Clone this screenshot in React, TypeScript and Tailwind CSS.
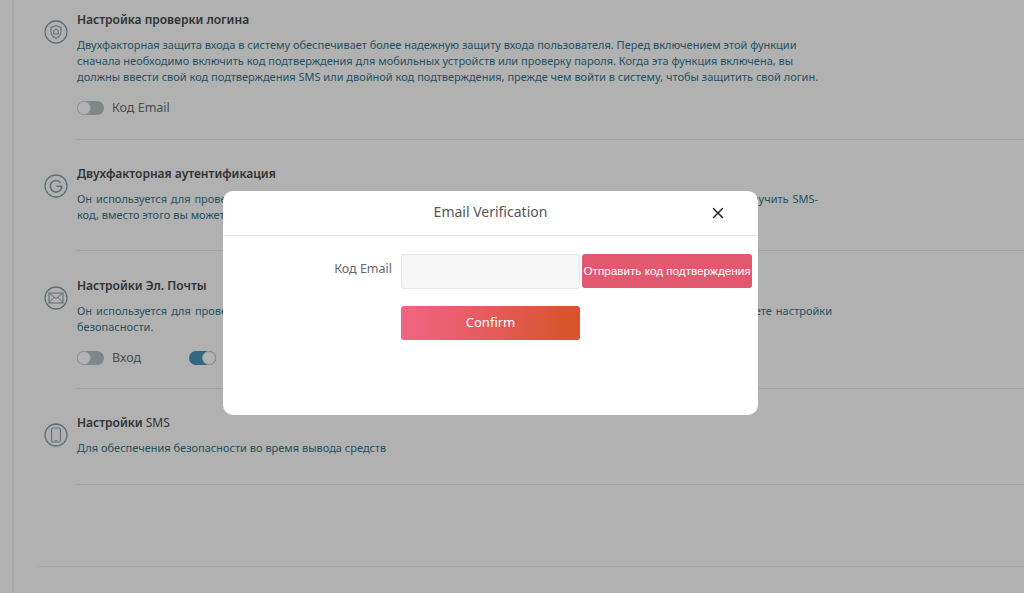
import { X } from "lucide-react";

const font = "font-['Noto_Sans',sans-serif]";

function Toggle({ on = false }: { on?: boolean }) {
  return (
    <span
      className={`flex h-[14px] w-[27px] items-center rounded-full ${on ? "justify-end bg-[#32677f]" : "justify-start bg-[#7f8789]"}`}
    >
      <span className="h-[14px] w-[14px] rounded-full border border-[#8f9698] bg-[#b3b3b3]" />
    </span>
  );
}

function IconCircle({ children }: { children: React.ReactNode }) {
  return (
    <svg viewBox="0 0 24 24" className="h-[24px] w-[24px] shrink-0 fill-none stroke-[#5f7177]">
      <circle cx="12" cy="12" r="11" strokeWidth="1.3" />
      {children}
    </svg>
  );
}

function Section({
  icon,
  title,
  lines,
  firstLineClass = "whitespace-nowrap",
  toggles,
  className,
}: {
  icon: React.ReactNode;
  title: React.ReactNode;
  lines: string[];
  firstLineClass?: string;
  toggles?: React.ReactNode;
  className: string;
}) {
  return (
    <section className={`flex gap-[9px] ${className}`}>
      <div className="flex w-[24px] shrink-0 pt-[8px]">{icon}</div>
      <div className="min-w-0 flex-1">
        <h3 className="text-[12px] font-semibold leading-[16px] text-[#2f3132]">{title}</h3>
        <div className="mt-[9px] text-[11px] leading-[16px] text-[#24505f]">
          {lines.map((l, i) => (
            <div key={l} className={i === 0 ? firstLineClass : "whitespace-nowrap"}>
              {l}
            </div>
          ))}
        </div>
        {toggles}
      </div>
    </section>
  );
}

export default function App() {
  return (
    <div className={`relative h-[593px] w-[1024px] overflow-hidden bg-[#b1b1b1] ${font}`}>
      <div className="ml-[12px] flex h-full flex-col border-l-2 border-[#a8a8a8] pl-[30px]">
        <div className="pt-[12px]">
          <Section
            className="h-[127px]"
            icon={
              <IconCircle>
                <path d="M12 5.6l5 1.9v3.9c0 3.3-2.1 5.5-5 6.9-2.9-1.4-5-3.6-5-6.9V7.5z" strokeWidth="1.1" />
                <path d="M9.6 14v-2.2a2.4 2.4 0 014.8 0V14z" strokeWidth="1" />
              </IconCircle>
            }
            title="Настройка проверки логина"
            lines={[
              "Двухфакторная защита входа в систему обеспечивает более надежную защиту входа пользователя. Перед включением этой функции",
              "сначала необходимо включить код подтверждения для мобильных устройств или проверку пароля. Когда эта функция включена, вы",
              "должны ввести свой код подтверждения SMS или двойной код подтверждения, прежде чем войти в систему, чтобы защитить свой логин.",
            ]}
            toggles={
              <div className="mt-[14px] flex items-center gap-[8px] text-[12.5px] leading-[18px] text-[#4a4c4d]">
                <Toggle />
                <span>Код Email</span>
              </div>
            }
          />
          <div className="ml-[33px] border-t border-[#9ea4a4]" />
        </div>
        <div className="pt-[26px]">
          <Section
            className="h-[84px]"
            icon={
              <IconCircle>
                <path d="M16.6 8.7A5.8 5.8 0 1017.8 12.2h-5.4" strokeWidth="1.6" />
              </IconCircle>
            }
            title="Двухфакторная аутентификация"
            firstLineClass="w-[741px] [text-align-last:justify]"
            lines={[
              "Он используется для проверки безопасности при входе в систему, выводе средств и в других делах. Если вы не можете получить SMS-",
              "код, вместо этого вы можете использовать двухфакторную аутентификацию Google.",
            ]}
          />
          <div className="ml-[33px] border-t border-[#9ea4a4]" />
        </div>
        <div className="pt-[27px]">
          <Section
            className="h-[110px]"
            icon={
              <IconCircle>
                <rect x="5" y="7" width="14" height="10" strokeWidth="1.1" />
                <path d="M5.2 7.2l6.8 5.4 6.8-5.4M5.2 16.8l4.8-5.6M18.8 16.8l-4.8-5.6" strokeWidth="1" />
              </IconCircle>
            }
            title="Настройки Эл. Почты"
            firstLineClass="w-[755px] [text-align-last:justify]"
            lines={[
              "Он используется для проверки безопасности при входе в систему, выводе средств, а также в тех случаях, когда вы изменяете настройки",
              "безопасности.",
            ]}
            toggles={
              <div className="mt-[14px] flex items-center text-[12.5px] leading-[18px] text-[#4a4c4d]">
                <div className="flex w-[112px] items-center gap-[8px]">
                  <Toggle />
                  <span>Вход</span>
                </div>
                <Toggle on />
              </div>
            }
          />
          <div className="ml-[33px] border-t border-[#9ea4a4]" />
        </div>
        <div className="pt-[26px]">
          <Section
            className="h-[69px]"
            icon={
              <IconCircle>
                <rect x="7.6" y="5" width="8.8" height="14" rx="1.6" strokeWidth="1.1" />
                <path d="M10.4 17.4h3.2" strokeWidth=".8" />
              </IconCircle>
            }
            title={
              <>
                Настройки <span className="font-normal">SMS</span>
              </>
            }
            lines={["Для обеспечения безопасности во время вывода средств"]}
          />
          <div className="ml-[33px] border-t border-[#9ea4a4]" />
        </div>
        <div className="mt-[81px] -ml-[7px] border-t border-[#a8a8a8]" />
      </div>

      <div className="absolute left-[223px] top-[191px] h-[224px] w-[535px] rounded-[10px] bg-white">
        <div className="relative flex h-[45px] items-center justify-center border-b border-[#e6e6e6] pb-[3px] text-[14px] text-[#555]">
          Email Verification
          <X className="absolute right-[31px] top-[13px] h-[18px] w-[18px] text-[#222]" strokeWidth={2} />
        </div>
        <div className="mt-[18px] flex items-start">
          <label className="w-[169px] pt-[6px] text-right text-[12.5px] leading-[18px] text-[#666]">Код Email</label>
          <div className="ml-[9px] h-[35px] w-[179px] rounded-[3px] border border-[#e4e4e4] bg-[#f6f6f6]" />
          <button className="ml-[2px] flex h-[34px] w-[170px] items-center justify-center whitespace-nowrap rounded-[3px] bg-[#e2596f] font-['Liberation_Sans',sans-serif] text-[11.7px] text-white">
            Отправить код подтверждения
          </button>
        </div>
        <button className="ml-[178px] mt-[17px] block h-[34px] w-[179px] rounded-[3px] bg-gradient-to-r from-[#ef6582] via-[#ec5f72] via-25% to-[#d9542c] to-90% text-[13px] text-white">
          Confirm
        </button>
      </div>
    </div>
  );
}
